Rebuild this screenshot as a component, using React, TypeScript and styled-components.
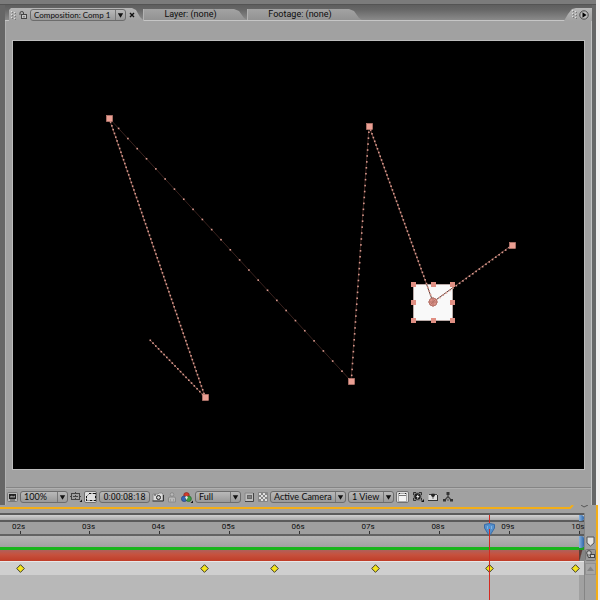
import React from "react";
import styled, { createGlobalStyle } from "styled-components";

const GlobalStyle = createGlobalStyle`
  *, *::before, *::after { box-sizing: border-box; }
  body { margin: 0; background: #f2f0f0; }
  button, select, input { font: inherit; color: inherit; margin: 0; }
`;

const Workspace = styled.main`
  display: flex;
  flex-direction: column;
  min-height: 100vh;
  overflow: hidden;
  font-family: Roboto, "Liberation Sans", sans-serif;
  font-size: 9px;
  line-height: 12px;
  color: #0c0c0c;
`;

/* ---------- Viewer ---------- */

const ViewerFrame = styled.section`
  margin-right: 4px;
  padding: 0 4px 0 5px;
  background: #666;
`;

const TitleStrip = styled.div`
  height: 5px;
  margin: 0 -4px 0 -5px;
  background: #7b7b7b;
  border-bottom: 1px solid #545454;
`;

const TabStrip = styled.header`
  display: flex;
  align-items: flex-end;
  height: 16px;
  background: linear-gradient(#5e5e5e, #666 30%, #8a8a8a);
  border-bottom: 1px solid #c6c6c6;
`;

const ActiveTab = styled.div`
  display: flex;
  align-items: center;
  gap: 2px;
  width: 135px;
  height: 13px;
  margin: 0 -1px -1px 4px;
  padding: 1px 0 0 2px;
  background: linear-gradient(#b5b5b5, #a1a1a1);
  clip-path: polygon(0 2px, 2px 0, 123px 0, 127px 2px, 131px 9px, 135px 13px, 0 13px);
`;

const Tab = styled.button`
  width: ${(p: { $width: number }) => p.$width}px;
  height: 11px;
  padding: 0 10px 0 0;
  border: 0;
  border-left: 1px solid #b2b2b2;
  background: linear-gradient(#a3a3a3, #929292);
  clip-path: polygon(0 0, calc(100% - 13px) 0, calc(100% - 8px) 2px, calc(100% - 3px) 9px, 100% 100%, 0 100%);
  line-height: 11px;
  text-align: center;
  white-space: nowrap;
`;

const PanelMenu = styled.div`
  display: flex;
  align-items: center;
  justify-content: flex-end;
  gap: 1px;
  width: 28px;
  height: 13px;
  margin: 0 0 -1px auto;
  padding-right: 3px;
  background: linear-gradient(#b9b9b9, #a1a1a1);
  clip-path: polygon(0 100%, 4px 6px, 8px 1px, 12px 0, 100% 0, 100% 100%);
`;

const IconButton = styled.button`
  display: grid;
  place-items: center;
  flex: none;
  width: ${(p: { $width: number; $lit?: boolean }) => p.$width}px;
  height: 12px;
  padding: 0;
  border: ${(p) => (p.$lit ? "1px solid #707070" : "0")};
  border-radius: 2px;
  background: ${(p) => (p.$lit ? "#e0e0e0" : "transparent")};
`;

const ViewerBody = styled.div`
  background: #a1a1a1;
  border-left: 1px solid #b2b2b2;
  border-right: 1px solid #c0c0c0;
`;

const StageArea = styled.div`
  padding: 20px 7px 18px;
  border-bottom: 1px solid #858585;
`;

const Stage = styled.svg`
  display: block;
  width: 100%;
  height: auto;
  background: #000;
  outline: 1px solid #bdbdbd;
`;

const Toolbar = styled.footer`
  display: flex;
  align-items: center;
  gap: 2px;
  height: 17px;
  padding-left: 1px;
  border-top: 1px solid #b0b0b0;
`;

const SelectBox = styled.span<{ $width: number; $compact?: boolean }>`
  position: relative;
  display: flex;
  flex: none;
  width: ${(p) => p.$width}px;
  height: 12px;
  border: 1px solid #6c6c6c;
  border-radius: 3px;
  background: linear-gradient(#b9b9b9, #999);

  select {
    width: 100%;
    padding: 0 10px 0 3px;
    border: 0;
    outline: 0;
    appearance: none;
    background: transparent;
    font-family: Lato, "Liberation Sans", sans-serif;
    font-size: ${(p) => (p.$compact ? 8 : 9)}px;
    line-height: 10px;
  }

  svg {
    position: absolute;
    top: 0;
    right: 0;
    width: 10px;
    height: 100%;
    border-left: 1px solid #777;
    pointer-events: none;
  }
`;

const TimeField = styled.input`
  flex: none;
  width: 51px;
  height: 12px;
  padding: 0;
  border: 1px solid #6c6c6c;
  border-radius: 3px;
  background: linear-gradient(#b9b9b9, #999);
  text-align: center;
  line-height: 10px;
`;

function Dropdown({ label, options, width, compact }: { label: string; options: string[]; width: number; compact?: boolean }) {
  return (
    <SelectBox $width={width} $compact={compact}>
      <select aria-label={label}>
        {options.map((o) => (
          <option key={o}>{o}</option>
        ))}
      </select>
      <svg viewBox="0 0 10 10" aria-hidden="true">
        <path d="M2 3h6L5 8z" fill="#111" />
      </svg>
    </SelectBox>
  );
}

/* ---------- Icons ---------- */

const GripIcon = () => (
  <svg width="6" height="9" viewBox="0 0 6 9" fill="#dedede" aria-hidden="true">
    {[0, 3, 6].map((y) => (
      <path key={y} d={`M0 ${y}h1v1h-1zM3 ${y + 1}h1v1h-1z`} />
    ))}
    {[0, 3, 6].map((y) => (
      <path key={y} d={`M1 ${y + 1}h1v1h-1zM4 ${y + 2}h1v1h-1z`} fill="#777" />
    ))}
  </svg>
);

const LockIcon = () => (
  <svg width="9" height="10" viewBox="0 0 9 10" fill="none" stroke="#444" aria-hidden="true">
    <path d="M1 5V3Q1 1.500 2.800 1.500T4.500 3V5" />
    <rect x="2.500" y="4.500" width="5" height="4" fill="#c5c5c5" />
    <path d="M5 6v1.500" />
  </svg>
);

const CloseIcon = () => (
  <svg width="6" height="6" viewBox="0 0 6 6" stroke="#111" strokeWidth="1.400" aria-hidden="true">
    <path d="M1 1l4 4M5 1L1 5" />
  </svg>
);

const FlyoutIcon = () => (
  <svg width="10" height="10" viewBox="0 0 10 10" aria-hidden="true">
    <circle cx="5" cy="5" r="4.200" fill="#bbb" stroke="#4a4a4a" />
    <path d="M3.500 2.300L7.500 5l-4 2.700z" fill="#000" />
  </svg>
);

const MonitorIcon = () => (
  <svg width="11" height="10" viewBox="0 0 11 10" aria-hidden="true">
    <rect x=".5" y=".5" width="10" height="9" rx="1" fill="#b8b8b8" stroke="#777" />
    <rect x="2" y="2" width="7" height="5" fill="#222" />
    <path d="M3 4.500l2-1 1 1 2-1v2H3z" fill="#999" />
    <path d="M3 8h5" stroke="#444" />
  </svg>
);

const GridIcon = () => (
  <svg width="12" height="10" viewBox="0 0 12 10" fill="none" stroke="#444" aria-hidden="true">
    <rect x="1.500" y="1.500" width="8" height="6" />
    <path d="M5.500 0v9M0 4.500h11" strokeDasharray="2 1" />
    <path d="M9.500 10H12V7.500z" fill="#111" stroke="none" />
  </svg>
);

const MaskIcon = () => (
  <svg width="12" height="10" viewBox="0 0 12 10" fill="none" aria-hidden="true">
    <path d="M1.500 8.500V4.500L4.500 1.500H10.500V8.500Z" stroke="#9a9a9a" />
    <path d="M1 7h1v2H1zM1 4h1v2H1zM4 1h2v1H4zM8 1h3v1H8zM10 4h1v2h-1zM9 8h2v1H9zM5 8h2v1H5z" fill="#111" />
  </svg>
);

const CameraIcon = () => (
  <svg width="12" height="10" viewBox="0 0 12 10" aria-hidden="true">
    <path d="M1 2h5l1-1h3l1 1v7H1z" fill="#dcdcdc" stroke="#888" />
    <path d="M.5 9h11V3" fill="none" stroke="#333" />
    <circle cx="6.500" cy="5.500" r="2" fill="#ccc" stroke="#222" />
    <path d="M2 3h2" stroke="#444" />
  </svg>
);

const PersonIcon = () => (
  <svg width="10" height="11" viewBox="0 0 10 11" fill="#b9b9b9" stroke="#8a8a8a" aria-hidden="true">
    <circle cx="5" cy="2.500" r="1.800" />
    <path d="M1.500 10V6Q1.500 5 3 5H7Q8.500 5 8.500 6V10z" />
    <path d="M3.500 7v3M6.500 7v3" stroke="#9c9c9c" />
  </svg>
);

const ChannelsIcon = () => (
  <svg width="12" height="11" viewBox="0 0 12 11" aria-hidden="true">
    <circle cx="5.500" cy="3.300" r="2.800" fill="#d33a2c" stroke="#7c2620" strokeWidth=".6" />
    <circle cx="3.200" cy="6.800" r="2.800" fill="#3564b5" stroke="#213b70" strokeWidth=".6" />
    <circle cx="7.600" cy="6.800" r="2.800" fill="#3c9a42" stroke="#225b29" strokeWidth=".6" />
    <path d="M4 5l1.500-1L7 5 5.500 8z" fill="#e6e6e6" />
    <path d="M9.500 11H12V8.500z" fill="#111" />
  </svg>
);

const RegionIcon = () => (
  <svg width="10" height="10" viewBox="0 0 10 10" fill="none" aria-hidden="true">
    <rect x="1" y="1" width="8" height="8" fill="#bdbdbd" />
    <path d="M1 9V1h8" stroke="#888" />
    <path d="M9.500 1v8.500H1" stroke="#444" />
    <rect x="3.500" y="3.500" width="4" height="3" fill="#ddd" stroke="#666" />
    <path d="M4 5h3" stroke="#222" />
  </svg>
);

const CheckerIcon = () => (
  <svg width="10" height="10" viewBox="0 0 10 10" aria-hidden="true">
    <rect width="10" height="10" rx="1" fill="#858585" />
    {[1, 3, 5, 7].map((y, r) =>
      [1, 5].map((x) => <rect key={`${x}-${y}`} x={x + (r % 2) * 2} y={y} width="2" height="2" fill="#dedede" />),
    )}
  </svg>
);

const WindowIcon = () => (
  <svg width="9" height="9" viewBox="0 0 9 9" fill="none" aria-hidden="true">
    <rect x=".5" y=".5" width="8" height="8" fill="#f4f4f4" stroke="#aaa" />
    <path d="M1 2.500h7" stroke="#777" />
    <path d="M1 .5h1M7 .5h1" stroke="#222" />
  </svg>
);

const FastPreviewIcon = () => (
  <svg width="12" height="10" viewBox="0 0 12 10" aria-hidden="true">
    <rect x="1" y="0" width="9" height="9" fill="#8a8a8a" />
    <path d="M1.500 3V.500H4M7 .500H9.500V3M9.500 6V8.500M1.500 6V8.500H4" fill="none" stroke="#333" />
    <circle cx="5.500" cy="4.500" r="3.200" fill="#222" />
    <path d="M6.500 2L4 5h1.500L5 7.500 7.500 4H6z" fill="#eee" />
    <path d="M9 10h3V7z" fill="#111" />
  </svg>
);

const TimelineIcon = () => (
  <svg width="10" height="8" viewBox="0 0 10 8" aria-hidden="true">
    <path d="M.5 1.500h9v5.500h-9z" fill="#ddd" />
    <path d="M0 7.500h10M9.500 2v5" stroke="#333" />
    <path d="M1 1.500h8" stroke="#444" />
    <path d="M3.500 1h3v2L5 4 3.500 3zM5 3v3" fill="#222" stroke="#222" strokeWidth=".6" />
  </svg>
);

const FlowIcon = () => (
  <svg width="10" height="10" viewBox="0 0 10 10" aria-hidden="true">
    <path d="M5 2v3M5 4.500L2 8M5 4.500L8 8" fill="none" stroke="#444" strokeWidth="1.200" />
    <path d="M3.500 0h3v3h-3zM0 7h3v2.500H0zM7 7h3v2.500H7z" fill="#333" />
    <path d="M4 7h2v2H4z" fill="#777" />
  </svg>
);

/* ---------- Motion path ---------- */

type Point = [number, number];

const vertices: Point[] = [
  [137, 299],
  [192, 356],
  [96, 77],
  [338, 340],
  [356, 85],
  [420, 261],
  [499, 204],
];
const frameSpacing = [4, 4, 14, 6, 4, 4];

function MotionPath() {
  return (
    <g>
      {frameSpacing.map((gap, i) => {
        const [x1, y1] = vertices[i];
        const [x2, y2] = vertices[i + 1];
        const steps = Math.round(Math.hypot(x2 - x1, y2 - y1) / gap);
        return (
          <g key={i}>
            <path d={`M${x1} ${y1}L${x2} ${y2}`} stroke={gap > 5 ? "#38211d" : "#5e3a34"} />
            {Array.from({ length: steps }, (_, n) => {
              const t = n / steps;
              const x = x1 + (x2 - x1) * t;
              const y = y1 + (y2 - y1) * t;
              return <rect key={n} x={x - 0.5} y={y - 0.5} width="1.600" height="1.600" fill="#dc9b8f" />;
            })}
          </g>
        );
      })}
      {[1, 2, 3, 4, 6].map((i) => (
        <rect key={i} x={vertices[i][0] - 2.5} y={vertices[i][1] - 2.5} width="6" height="6" fill="#ea9f93" stroke="#c98378" strokeWidth=".6" />
      ))}
    </g>
  );
}

function Composition() {
  return (
    <Stage viewBox="0 0 571 428" role="img" aria-label="Square layer with its motion path">
      <rect x="400.500" y="243.500" width="39" height="36" fill="#f9f9f9" stroke="#b9aaa7" />
      <MotionPath />
      {[400, 420, 439].map((x) =>
        [243, 261, 279].map((y) =>
          x === 420 && y === 261 ? null : (
            <rect key={`${x}-${y}`} x={x - 2} y={y - 2} width="5" height="5" fill="#e08f83" />
          ),
        ),
      )}
      <circle cx="420" cy="261" r="4" fill="#dc9389" stroke="#b8746a" />
      <path d="M415 261h10M420 256v10M417 264l6-6" stroke="#b8746a" />
    </Stage>
  );
}

/* ---------- Timeline ---------- */

const TimelineFrame = styled.section`
  display: flex;
  flex: 1;
  flex-direction: column;
  margin-right: 2px;
  background: #a1a1a1;
  border-right: 2px solid #f3ae17;
`;

const FocusEdge = styled.div`
  display: flex;
  height: 8px;

  &::before {
    content: "";
    flex: 1;
    height: 4px;
    border-bottom: 2px solid #f3ae17;
  }

  svg { flex: none; }
`;

const TimelineBody = styled.div`
  display: flex;
  flex: 1;
`;

const Tracks = styled.div`
  position: relative;
  display: flex;
  flex: 1;
  flex-direction: column;
  background: #b8b8b8;
`;

const Navigator = styled.div`
  height: 9px;
  border: solid #5b5b5b;
  border-width: 2px 0;
  background: linear-gradient(#d2d2d2, #a9a9a9);
`;

const Ruler = styled.div`
  position: relative;
  height: 14px;
  background: #9f9f9f;
  border-bottom: 2px solid #636363;
`;

const Mark = styled.span`
  position: absolute;
  top: 0;
  height: 12px;
  width: 20px;
  margin-left: -11px;
  text-align: center;
  font-size: 8px;
  line-height: 10px;

  &::after {
    content: "";
    position: absolute;
    right: 8px;
    bottom: 0;
    width: 1px;
    height: 3px;
    background: #333;
  }
`;

const WorkArea = styled.div`
  height: 14px;
  background: linear-gradient(#b4b4b4, #a2a2a2);
  border-bottom: 3px solid #18b51c;
`;

const LayerBar = styled.div`
  height: 11px;
  background: linear-gradient(#b0605a, #c6523f 40%, #c03d28);
`;

const KeyRow = styled.div`
  position: relative;
  height: 14px;
  background: #cfcfcf;
  border-top: 1px solid #e8e8e8;
`;

const Keyframe = styled.button`
  position: absolute;
  top: 2px;
  width: 9px;
  height: 9px;
  margin-left: -4px;
  padding: 0;
  border: 0;
  background: none;

  svg { display: block; }
`;

const AfterEnd = styled.div`
  position: absolute;
  top: 7px;
  right: 0;
  bottom: 0;
  width: 5px;
  background: rgba(60, 60, 60, 0.18);
`;

const EndHandle = styled.span<{ $top: number; $height: number }>`
  position: absolute;
  top: ${(p) => p.$top}px;
  right: 0;
  width: 5px;
  height: ${(p) => p.$height}px;
  border-radius: 0 3px 3px 0;
  background: linear-gradient(90deg, #86b2e0, #2f66a8);
`;

const LayerEnd = styled.span`
  position: absolute;
  top: 37px;
  right: 0;
  width: 5px;
  height: 11px;
  background: linear-gradient(105deg, #5e3a34 35%, #858585 50%);
`;

const Playhead = styled.div`
  position: absolute;
  top: 2px;
  bottom: 0;
  width: 1px;
  background: #d42a20;

  svg {
    position: absolute;
    top: 8px;
    left: -5px;
  }
`;

const SideRail = styled.aside`
  display: flex;
  flex-direction: column;
  align-items: center;
  width: 12px;
  padding-top: 22px;
  gap: 2px;
  border-left: 1px solid #858585;
`;

const START = 1.72;
const SPAN = 8.355;
const at = (seconds: number) => ({ left: `${((seconds - START) / SPAN) * 100}%` });

const marks = [2, 3, 4, 5, 6, 7, 8, 9, 10];
const keys = [2, 4.64, 5.64, 7.08, 8.72, 9.95];

function Timeline() {
  return (
    <TimelineFrame aria-label="Timeline">
      <FocusEdge>
        <svg width="28" height="6" viewBox="0 0 28 6" aria-hidden="true">
          <path d="M0 3h2L5 0" fill="none" stroke="#f3ae17" strokeWidth="2" />
          <path d="M13 0l3 2 4-2" fill="none" stroke="#555" />
        </svg>
      </FocusEdge>
      <TimelineBody>
        <Tracks>
          <Navigator />
          <Ruler>
            {marks.map((m) => (
              <Mark key={m} style={at(m)}>
                {String(m).padStart(2, "0")}s
              </Mark>
            ))}
          </Ruler>
          <WorkArea />
          <LayerBar />
          <AfterEnd />
          <KeyRow>
            {keys.map((k) => (
              <Keyframe key={k} style={at(k)} aria-label={`Keyframe at ${k}s`}>
                <svg width="9" height="9" viewBox="0 0 9 9">
                  <path d="M4.500 .7L8.300 4.500 4.500 8.300 .7 4.500z" fill="#f5e51c" stroke="#3c3a28" />
                </svg>
              </Keyframe>
            ))}
          </KeyRow>
          <EndHandle $top={2} $height={6} />
          <EndHandle $top={23} $height={12} />
          <LayerEnd />
          <Playhead style={at(8.72)}>
            <svg width="11" height="12" viewBox="0 0 11 12" aria-hidden="true">
              <path d="M.5 1.500Q5.500-.5 10.500 1.500V5L6.500 11.500H4.500L.5 5z" fill="#5490cc" stroke="#3a6ba6" />
              <path d="M3.500 3v3M7.500 3v3" stroke="#83b2e0" />
              <path d="M5.500 6v6" stroke="#d42a20" />
            </svg>
          </Playhead>
        </Tracks>
        <SideRail>
          <IconButton $width={10} aria-label="Marker bin">
            <svg width="9" height="11" viewBox="0 0 9 11">
              <path d="M1 1h7v6L4.500 10 1 7z" fill="#e2e2e2" stroke="#555" />
            </svg>
          </IconButton>
          <IconButton $width={11} aria-label="Comp button">
            <svg width="11" height="12" viewBox="0 0 11 12">
              <rect x=".5" y=".5" width="10" height="11" rx="1" fill="#999" stroke="#777" />
              <circle cx="4" cy="4" r="2.300" fill="#ccc" stroke="#444" />
              <rect x="5.500" y="5.500" width="4" height="3" fill="#ccc" stroke="#444" />
              <path d="M2 6l2 3 2-2" fill="#bbb" stroke="#444" />
            </svg>
          </IconButton>
          <IconButton $width={11} aria-label="Scroll up">
            <svg width="11" height="12" viewBox="0 0 11 12">
              <rect x=".5" y=".5" width="10" height="11" fill="#a6a6a6" stroke="#939393" />
              <path d="M5.500 3.500L9 8H2z" fill="#858585" />
            </svg>
          </IconButton>
        </SideRail>
      </TimelineBody>
    </TimelineFrame>
  );
}

export default function App() {
  return (
    <>
      <GlobalStyle />
      <Workspace>
        <ViewerFrame aria-label="Composition viewer">
          <TitleStrip />
          <TabStrip>
            <ActiveTab>
              <GripIcon />
              <LockIcon />
              <Dropdown label="Composition" options={["Composition: Comp 1"]} width={96} compact />
              <IconButton $width={8} aria-label="Close tab">
                <CloseIcon />
              </IconButton>
            </ActiveTab>
            <Tab $width={104}>Layer: (none)</Tab>
            <Tab $width={115}>Footage: (none)</Tab>
            <PanelMenu>
              <GripIcon />
              <IconButton $width={10} aria-label="Panel menu">
                <FlyoutIcon />
              </IconButton>
            </PanelMenu>
          </TabStrip>
          <ViewerBody>
            <StageArea>
              <Composition />
            </StageArea>
            <Toolbar>
              <IconButton $width={11} aria-label="Always preview this view"><MonitorIcon /></IconButton>
              <Dropdown label="Magnification" options={["100%"]} width={48} />
              <IconButton $width={12} aria-label="Grid and guides"><GridIcon /></IconButton>
              <IconButton $width={13} $lit aria-label="Toggle mask visibility"><MaskIcon /></IconButton>
              <TimeField aria-label="Current time" defaultValue="0:00:08:18" />
              <IconButton $width={12} aria-label="Take snapshot"><CameraIcon /></IconButton>
              <IconButton $width={12} aria-label="Show last snapshot"><PersonIcon /></IconButton>
              <IconButton $width={13} aria-label="Show channel"><ChannelsIcon /></IconButton>
              <Dropdown label="Resolution" options={["Full"]} width={46} />
              <IconButton $width={12} aria-label="Region of interest"><RegionIcon /></IconButton>
              <IconButton $width={11} aria-label="Transparency grid"><CheckerIcon /></IconButton>
              <Dropdown label="3D view" options={["Active Camera"]} width={76} />
              <Dropdown label="View layout" options={["1 View"]} width={46} />
              <IconButton $width={13} $lit aria-label="Pixel aspect ratio"><WindowIcon /></IconButton>
              <IconButton $width={13} aria-label="Fast previews"><FastPreviewIcon /></IconButton>
              <IconButton $width={13} aria-label="Timeline"><TimelineIcon /></IconButton>
              <IconButton $width={13} aria-label="Flowchart"><FlowIcon /></IconButton>
            </Toolbar>
          </ViewerBody>
        </ViewerFrame>
        <Timeline />
      </Workspace>
    </>
  );
}
